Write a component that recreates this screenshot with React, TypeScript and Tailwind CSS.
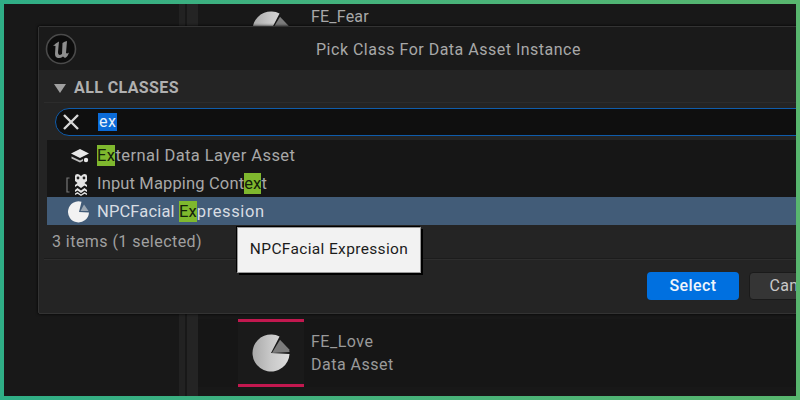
const FONT = "font-['Roboto','Liberation_Sans',sans-serif]";

function Pie({ size, top }: { size: number; top?: boolean }) {
  return (
    <svg width={size} height={size} viewBox="0 0 40 40" className="shrink-0">
      <defs>
        <linearGradient id={top ? "pa" : "pb"} x1="0" x2="1" y1="0" y2="0">
          <stop offset="0" stopColor="#a9a9a9" />
          <stop offset="0.5" stopColor="#c9c9c9" />
          <stop offset="1" stopColor="#dddddd" />
        </linearGradient>
      </defs>
      <path d="M20 20 L39.5 21 A19.5 19.5 0 1 1 29 2.7 Z" fill={`url(#${top ? "pa" : "pb"})`} />
      <path d="M21 20 L29.5 6 L39 16 L39.5 19 Z" fill="#7c7c7c" />
    </svg>
  );
}

function Hl({ children }: { children: string }) {
  return <span className="bg-[#7fb82e] py-[1px] text-[#14200a]">{children}</span>;
}

function LayersIcon() {
  return (
    <svg width="20" height="16" viewBox="0 0 20 16">
      <path d="M10 1 L19 5.5 L10 10 L1 5.5 Z" fill="#e8e8e8" />
      <path d="M1.5 8.5 L10 12.5 L13 11 L13 13 L10 14.5 L1.5 10.5 Z" fill="#bdbdbd" />
      <circle cx="16" cy="12" r="2.2" fill="#e8e8e8" />
    </svg>
  );
}

function MappingIcon() {
  return (
    <svg width="24" height="23" viewBox="0 0 24 23">
      <path d="M3.5 5 H1 V19 H3.5" fill="none" stroke="#777" strokeWidth="1.2" />
      <path
        d="M9 8 L9 3 Q9 1 11.5 1 Q13 1 15 3 Q17 1 18.5 1 Q21 1 21 3 L21 8 L18.5 10 L21 12 L21 14 L18.5 12.5 L15 15 L11.5 12.5 L9 14 L9 12 L11.5 10 Z"
        fill="#e4e4e4"
      />
      <path d="M9 17 L11.5 15 L15 17.5 L18.5 15 L21 17 L21 19 L18.5 17.5 L15 20 L11.5 17.5 L9 19 Z" fill="#e4e4e4" />
      <path d="M9 20.5 L11.5 19 L15 21.5 L18.5 19 L21 20.5 L21 22 L18.5 20.8 L15 23 L11.5 20.8 L9 22 Z" fill="#e4e4e4" />
      <circle cx="12" cy="5" r="1.4" fill="#222" />
      <circle cx="18" cy="5" r="1.4" fill="#222" />
    </svg>
  );
}

function SmallPie() {
  return (
    <svg width="22" height="22" viewBox="0 0 22 22">
      <path d="M11 11 L21 11.5 A10.5 10.5 0 1 1 13.5 .8 Z" fill="#f2f2f2" />
      <path d="M12.5 10 L16 3.5 L20.5 10 Z" fill="#9aa6b2" />
    </svg>
  );
}

function UeLogo() {
  return (
    <svg width="32" height="32" viewBox="0 0 32 32">
      <circle cx="16" cy="16" r="14.5" fill="#0c0c0c" stroke="#4a4a4a" strokeWidth="1.6" />
      <path
        d="M8 13 Q10.5 10 14 8.5 L13 19 Q13 22 15 22 L17 21 L17.5 10 Q19.5 8.5 22 8 L21 20 Q22 21 24 19.5 Q22.5 24 20 25 L18 23.5 Q15.5 25.5 13 25 Q10 24.5 10 21 L10.5 13 Q9.5 12.5 8 13 Z"
        fill="#8e8e8e"
      />
    </svg>
  );
}

function Row({ icon, selected, children, className }: { icon: React.ReactNode; selected?: boolean; children: React.ReactNode; className: string }) {
  return (
    <div className={`flex h-[28px] items-center pt-[2px] ${selected ? "bg-[#425c78] text-[#d8dde3]" : "text-[#a8a8a8]"}`}>
      <div className="flex w-[50px] shrink-0 items-center justify-end pr-[7px]">{icon}</div>
      <span className={`text-[16.5px] ${className}`}>{children}</span>
    </div>
  );
}

export default function App() {
  return (
    <div className={`h-[400px] w-[800px] overflow-hidden bg-gradient-to-r from-[#2fae86] to-[#58b66e] p-1 ${FONT}`}>
      <div className="relative flex h-[392px] w-[792px] overflow-hidden bg-[#181818]">
        <div className="w-[175px] shrink-0" />
        <div className="w-[6px] shrink-0 bg-[#222222]" />
        <div className="w-[2px] shrink-0" />
        <div className="w-[11px] shrink-0 bg-[#242424]" />
        <div className="flex flex-1 flex-col">
          <div className="flex h-[51px] pl-[40px] pt-[7px]">
            <div className="flex w-[66px] justify-center">
              <Pie size={38} top />
            </div>
            <span className="ml-[7px] text-[16px] leading-[12px] tracking-[0.2px] text-[#a8a8a8]">FE_Fear</span>
          </div>
          <div className="h-[264px]" />
          <div className="flex h-[68px] bg-[#161616] pl-[40px]">
            <div className="flex w-[66px] items-center justify-center border-y-[3px] border-[#c2184f] bg-[#1a1a1a]">
              <Pie size={38} />
            </div>
            <div className="ml-[7px] flex flex-col justify-center gap-[3px] text-[16px] leading-[20px] tracking-[0.5px] text-[#9a9a9a]">
              <span>FE_Love</span>
              <span>Data Asset</span>
            </div>
          </div>
        </div>

        <div className="absolute left-[34px] top-[22px] flex h-[288px] w-[790px] flex-col rounded-[2px] border border-[#333333] bg-[#242424] shadow-[0_0_3px_#000]">
          <div className="relative flex h-[43px] items-center justify-center bg-[#1a1a1a] pt-[2px]">
            <div className="absolute left-[6px] top-[6px]">
              <UeLogo />
            </div>
            <span className="mr-[-31px] text-[16px] tracking-[0.5px] text-[#a8a8a8]">Pick Class For Data Asset Instance</span>
          </div>
          <div className="flex h-[32px] shrink-0 items-center gap-[8px] pl-[15px] pt-[4px] text-[#b0b0b0]">
            <svg width="12" height="9" viewBox="0 0 12 9">
              <path d="M0 0 H12 L6 9 Z" fill="#a0a0a0" />
            </svg>
            <span className="text-[16px] font-bold tracking-[0.4px]">ALL CLASSES</span>
          </div>
          <div className="ml-[5px] flex flex-1 flex-col border-t border-[#2c2c2c] bg-[#242424]">
            <div className="-mr-[5px] ml-[11px] mt-[5px] flex h-[28px] w-[760px] shrink-0 items-center rounded-[14px] border border-[#0f5cab] bg-[#0f0f0f] pl-[4px]">
              <svg width="22" height="22" viewBox="0 0 22 22">
                <path d="M4 4 L18 18 M18 4 L4 18" stroke="#d8d8d8" strokeWidth="2.4" />
              </svg>
              <span className="ml-[16px] bg-[#0b6bd8] px-[1px] text-[16px] leading-[18px] tracking-[0.4px] text-[#e8f0fa]">ex</span>
            </div>
            <div className="ml-[3px] mt-[4px] flex flex-col bg-[#161616] pt-px">
              <Row icon={<LayersIcon />} className="tracking-[0.43px]">
                <Hl>Ex</Hl>ternal Data Layer Asset
              </Row>
              <Row icon={<MappingIcon />} className="tracking-[0.15px]">
                Input Mapping Cont<Hl>ex</Hl>t
              </Row>
              <Row icon={<SmallPie />} selected className="tracking-[0.15px]">
                NPCFacial <Hl>Ex</Hl><span className="tracking-[0.6px]">pression</span>
              </Row>
            </div>
            <div className="flex h-[34px] items-center border-b border-[#1c1c1c] pl-[8px] text-[16px] tracking-[0.45px] text-[#a0a0a0]">
              3 items (1 selected)
            </div>
            <div className="flex flex-1 items-start gap-[10px] border-t border-[#2e2e2e] pl-[603px] pt-[12px]">
              <div className="flex h-[28px] w-[92px] shrink-0 items-center justify-center rounded-[4px] bg-[#0070e0] text-[16px] font-medium tracking-[0.4px] text-[#f0f5fb]">
                Select
              </div>
              <div className="flex h-[28px] w-[92px] shrink-0 items-center justify-center rounded-[4px] border border-[#1a1a1a] bg-[#353535] text-[16px] tracking-[0.4px] text-[#c8c8c8]">
                Cancel
              </div>
            </div>
          </div>
        </div>

        <div className="absolute left-[233px] top-[223px] flex h-[46px] w-[184px] items-center justify-center border border-[#999999] bg-[#f2f2f2] text-[15.5px] tracking-[0.35px] text-[#1c1c1c] shadow-[2px_2px_0_#000,-1px_-1px_0_#000]">
          NPCFacial Expression
        </div>
      </div>
    </div>
  );
}
